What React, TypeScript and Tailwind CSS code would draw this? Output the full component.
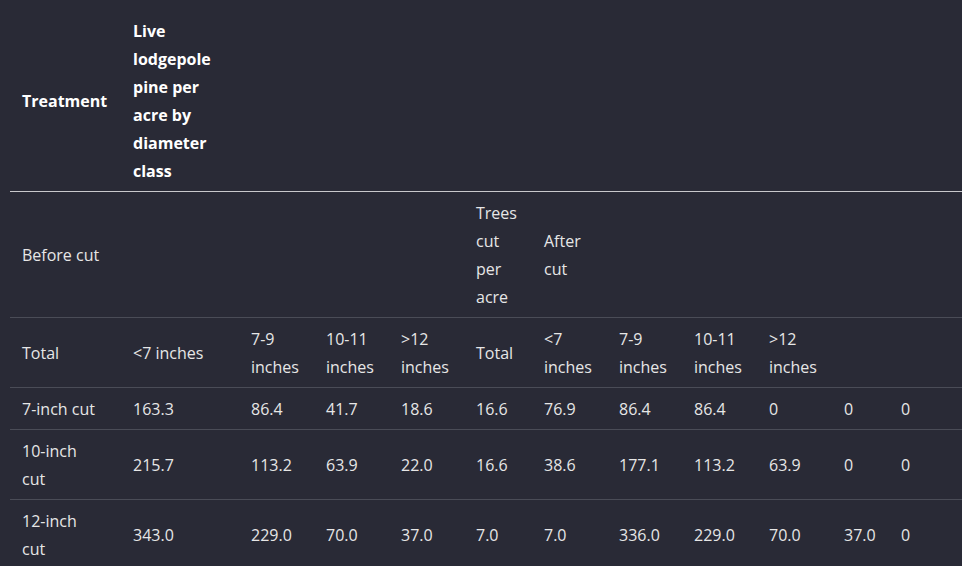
const colWidths = [111, 118, 75, 75, 75, 68, 75, 75, 75, 75, 57, 73];

const subHeads = [
  'Total',
  '<7 inches',
  '7-9 inches',
  '10-11 inches',
  '>12 inches',
  'Total',
  '<7 inches',
  '7-9 inches',
  '10-11 inches',
  '>12 inches',
  '',
  '',
];

const rows: string[][] = [
  ['7-inch cut', '163.3', '86.4', '41.7', '18.6', '16.6', '76.9', '86.4', '86.4', '0', '0', '0'],
  ['10-inch cut', '215.7', '113.2', '63.9', '22.0', '16.6', '38.6', '177.1', '113.2', '63.9', '0', '0'],
  ['12-inch cut', '343.0', '229.0', '70.0', '37.0', '7.0', '7.0', '336.0', '229.0', '70.0', '37.0', '0'],
];

const cell = 'pl-3 pr-3 pt-[7px] pb-[6px] align-middle text-left border-b border-[#4a4c57]';

function Cell({ i, children }: { i: number; children?: React.ReactNode }) {
  return <td className={i === 0 ? `${cell} pr-[19px]` : cell}>{children}</td>;
}

export default function App() {
  return (
    <div
      className="min-h-screen bg-[#292a36] pl-[10px] pt-[9px] overflow-hidden text-[16px] leading-7 text-[#e6e6e6]"
      style={{ fontFamily: '"Open Sans", "Noto Sans", sans-serif' }}
    >
      <table className="table-fixed w-[952px] border-collapse">
        <colgroup>
          {colWidths.map((w, i) => (
            <col key={i} style={{ width: w }} />
          ))}
        </colgroup>
        <thead>
          <tr>
            <th className="pl-3 pr-[19px] pt-[8px] pb-[6px] align-middle text-left font-bold text-white border-b border-[#c8c8cc] whitespace-nowrap">
              Treatment
            </th>
            <th className="px-3 pt-[8px] pb-[6px] align-middle text-left font-bold text-white border-b border-[#c8c8cc]">
              Live lodgepole pine per acre by diameter class
            </th>
            {Array.from({ length: 10 }).map((_, i) => (
              <th key={i} className="border-b border-[#c8c8cc]" />
            ))}
          </tr>
        </thead>
        <tbody>
          <tr>
            <Cell i={0}>Before cut</Cell>
            <Cell i={1} />
            <Cell i={2} />
            <Cell i={3} />
            <Cell i={4} />
            <Cell i={5}>Trees cut per acre</Cell>
            <Cell i={6}>After cut</Cell>
            <Cell i={7} />
            <Cell i={8} />
            <Cell i={9} />
            <Cell i={10} />
            <Cell i={11} />
          </tr>
          <tr>
            {subHeads.map((t, i) => (
              <Cell key={i} i={i}>
                {t}
              </Cell>
            ))}
          </tr>
          {rows.map((r, ri) => (
            <tr key={ri}>
              {r.map((t, i) => (
                <Cell key={i} i={i}>
                  {t}
                </Cell>
              ))}
            </tr>
          ))}
        </tbody>
      </table>
    </div>
  );
}
